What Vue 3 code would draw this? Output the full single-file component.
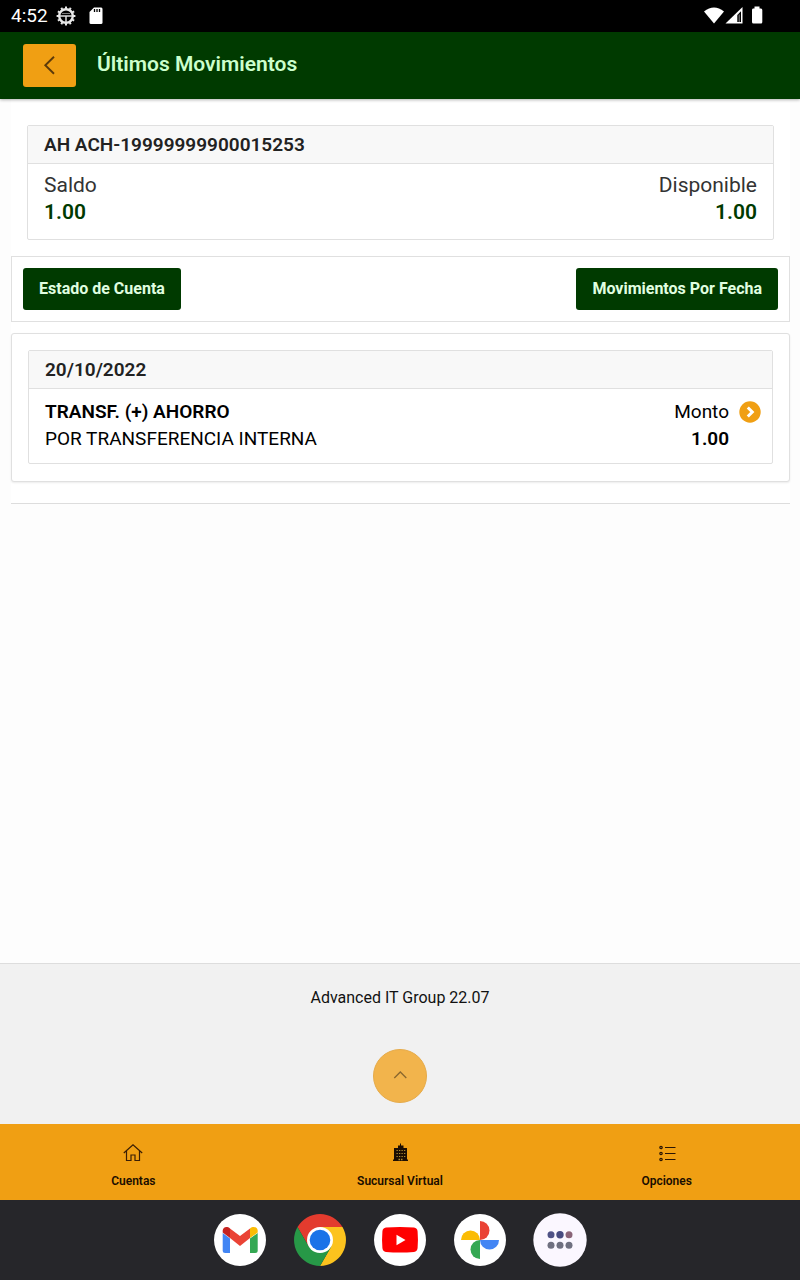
<script setup>
const account = { name: 'AH ACH-19999999900015253', balance: '1.00', available: '1.00' }
const movements = [
  { date: '20/10/2022', title: 'TRANSF. (+) AHORRO', detail: 'POR TRANSFERENCIA INTERNA', amount: '1.00' }
]
const teeth = Array.from({ length: 12 }, (_, i) => i * 30)
</script>

<template>
  <div class="screen">
    <div class="status">
      <span class="clock">4:52</span>
      <svg class="gear" width="20" height="20" viewBox="0 0 20 20">
        <circle cx="10" cy="10" r="6.8" fill="none" stroke="#e8e8e8" stroke-width="2.4" />
        <path v-for="t in teeth" :key="t" d="M10 .6V3" stroke="#e8e8e8" stroke-width="2" :transform="`rotate(${t} 10 10)`" />
        <path d="M4 10H16M10 10V16" stroke="#ddd" stroke-width="1.5" />
        <path d="M6 7.500h8" stroke="#777" stroke-width="1" />
      </svg>
      <svg class="card-icon" width="14" height="18" viewBox="0 0 14 18">
        <path d="M5 .5H12.2Q13.5.5 13.5 2V15.500Q13.500 17 12 17H2Q.5 17 .5 15.500V5Z" fill="#fff" />
        <path d="M5.500 2V5M8 2V5M10.500 2V5" stroke="#000" stroke-width="1.300" />
      </svg>
      <span class="grow"></span>
      <svg width="60" height="20" viewBox="0 0 60 20">
        <path d="M1 5.500Q11-2.500 21 5.500L11 17.500Z" fill="#fff" />
        <path d="M22.500 17.500L39.500 1V17.500Z" fill="#fff" />
        <path d="M34.300 9L38 5.300V16H34.300Z" fill="#000" />
        <path d="M36.200 8.500V16" stroke="#888" stroke-width="1" />
        <path d="M50 2.500H51.500V.5H56.500V2.500H58Q59.300 2.500 59.300 4V16Q59.300 17.500 58 17.500H50.500Q49 17.500 49 16V4Q49 2.500 50 2.500Z" fill="#fff" />
      </svg>
    </div>

    <header class="header">
      <button class="back" type="button" aria-label="Atrás">
        <svg width="14" height="20" viewBox="0 0 14 20"><path d="M11 .8L2.300 9.300L11 17.800" fill="none" stroke="#5c3a0a" stroke-width="1.900" /></svg>
      </button>
      <h1>Últimos Movimientos</h1>
    </header>

    <main class="main">
      <div class="content">
        <section class="card account">
          <h2>{{ account.name }}</h2>
          <div class="card-body balances">
            <div><p>Saldo</p><strong>{{ account.balance }}</strong></div>
            <div class="right"><p>Disponible</p><strong>{{ account.available }}</strong></div>
          </div>
        </section>

        <div class="toolbar">
          <button type="button">Estado de Cuenta</button>
          <button type="button">Movimientos Por Fecha</button>
        </div>

        <section class="panel">
          <article v-for="m in movements" :key="m.date" class="card">
            <h2>{{ m.date }}</h2>
            <div class="card-body movement">
              <div class="desc"><strong>{{ m.title }}</strong><p>{{ m.detail }}</p></div>
              <div class="right"><p>Monto</p><strong>{{ m.amount }}</strong></div>
              <button class="more" type="button" aria-label="Ver detalle">
                <svg width="22" height="22" viewBox="0 0 22 22">
                  <circle cx="11" cy="11" r="10.700" fill="#f09f13" />
                  <path d="M8.800 6.500L13.300 11L8.800 15.500" fill="none" stroke="#fff" stroke-width="3" />
                </svg>
              </button>
            </div>
          </article>
        </section>
      </div>
    </main>

    <footer class="footer">
      <p>Advanced IT Group 22.07</p>
      <button class="top" type="button" aria-label="Subir">
        <svg width="14" height="9" viewBox="0 0 14 9"><path d="M1.300 6L7.300 0L13.300 6" fill="none" stroke="#8a672e" stroke-width="1.300" /></svg>
      </button>
    </footer>

    <nav class="tabs">
      <a href="#cuentas">
        <svg width="20" height="20" viewBox="0 0 20 20" fill="none" stroke="#3a1e05" stroke-width="1.200">
          <path d="M.8 10L10 1.800L19.200 10M3.500 8V17.500H8V12H12V17.500H16.500V8" />
        </svg>
        <span>Cuentas</span>
      </a>
      <a href="#sucursal">
        <svg width="20" height="20" viewBox="0 0 20 20">
          <path d="M10 .5H11V2.500H13.500V5H17V16.500H18V18H3V16.500H4V5H8V2.500H10Z" fill="#1c0e02" />
          <path d="M6.500 7.500H15.500M6.500 10.500H15.500M6.500 13.500H15.500" stroke="#b08a30" stroke-width="1.200" stroke-dasharray="1.300 1.200" />
          <path d="M8.500 16.500H10M11 16.500H12.500" stroke="#b08a30" stroke-width="1.500" />
        </svg>
        <span>Sucursal Virtual</span>
      </a>
      <a href="#opciones">
        <svg width="20" height="20" viewBox="0 0 20 20" fill="none" stroke="#2a1503" stroke-width="1.200">
          <circle cx="4" cy="4.500" r="1.200" /><circle cx="4" cy="10.500" r="1.200" /><circle cx="4" cy="16.500" r="1.200" />
          <path d="M8 4.500H18.500M8 10.500H18.500M8 16.500H18.500" />
        </svg>
        <span>Opciones</span>
      </a>
    </nav>

    <div class="dock">
      <button type="button" aria-label="Gmail">
        <svg viewBox="0 0 52 52">
          <circle cx="26" cy="26" r="26" fill="#fff" />
          <path d="M8.700 19L16 24.500V39H11.200Q8.700 39 8.700 36.500Z" fill="#4285f4" />
          <path d="M43.700 19L36 24.500V39H41.200Q43.700 39 43.700 36.500Z" fill="#34a853" />
          <path d="M16 14.500L26 22L36 14.500V24L26 32L16 24Z" fill="#ea4335" />
          <path d="M8.700 18.500V16.800C8.700 13 13 11.800 16 14.500V24Z" fill="#c5221f" />
          <path d="M43.700 18.500V16.800C43.700 13 39 11.800 36 14.500V24Z" fill="#fbbc04" />
        </svg>
      </button>
      <button type="button" aria-label="Chrome">
        <svg viewBox="0 0 52 52">
          <path d="M26 13H48.500A26 26 0 0 0 3.500 13L14.700 32.500L26 26Z" fill="#e33b2e" />
          <path d="M26 13H48.500A26 26 0 0 0 3.500 13L14.700 32.500L26 26Z" fill="#fcc31e" transform="rotate(120 26 26)" />
          <path d="M26 13H48.500A26 26 0 0 0 3.500 13L14.700 32.500L26 26Z" fill="#279847" transform="rotate(240 26 26)" />
          <circle cx="26" cy="26" r="13" fill="#fff" />
          <circle cx="26" cy="26" r="10.300" fill="#1a73e8" />
        </svg>
      </button>
      <button type="button" aria-label="YouTube">
        <svg viewBox="0 0 52 52">
          <circle cx="26" cy="26" r="26" fill="#fff" />
          <path d="M12 13.600Q26 12.600 40 13.600Q43.300 14 43.600 17.500Q44.300 26 43.600 34Q43.300 37.500 40 38Q26 39 12 38Q8.700 37.500 8.400 34Q7.700 26 8.400 17.500Q8.700 14 12 13.600Z" fill="#f00" />
          <path d="M22.500 20.700L31.500 26L22.500 31.300Z" fill="#fff" />
        </svg>
      </button>
      <button type="button" aria-label="Fotos">
        <svg viewBox="0 0 52 52">
          <circle cx="26" cy="26" r="26" fill="#fff" />
          <path d="M26 7A9.500 9.500 0 0 1 26 26Z" fill="#ea4335" />
          <path d="M45 26A9.500 9.500 0 0 1 26 26Z" fill="#4285f4" />
          <path d="M26 45A9.500 9.500 0 0 1 26 26Z" fill="#34a853" />
          <path d="M7 26A9.500 9.500 0 0 1 26 26Z" fill="#fbbc04" />
        </svg>
      </button>
      <button type="button" aria-label="Aplicaciones">
        <svg viewBox="0 0 52 52">
          <circle cx="26" cy="26" r="26.700" fill="#fbf7ff" />
          <circle cx="17" cy="20.700" r="3.500" fill="#4f5286" />
          <circle cx="26" cy="20.700" r="3.700" fill="#474b80" />
          <circle cx="35" cy="20.700" r="3.500" fill="#8a6478" />
          <circle cx="17" cy="31.300" r="3.500" fill="#6f7080" />
          <circle cx="26" cy="31.300" r="3.500" fill="#6f7080" />
          <circle cx="35" cy="31.300" r="3.500" fill="#6f7080" />
        </svg>
      </button>
    </div>
  </div>
</template>

<style>
body { margin: 0; background: #fdfdfd; }
</style>

<style scoped>
.screen {
  min-height: 100vh;
  display: flex;
  flex-direction: column;
  font-family: Roboto, "Liberation Sans", sans-serif;
  color: #111;
}
.screen *, .screen { box-sizing: border-box; }
h1, h2, p { margin: 0; }
button { font-family: inherit; border: 0; padding: 0; margin: 0; cursor: pointer; }
svg { display: block; overflow: visible; }

.status {
  height: 32px;
  background: #000;
  color: #fff;
  display: flex;
  align-items: center;
  padding: 0 37px 0 11px;
}
.clock { font-size: 19px; line-height: 32px; }
.gear { margin-left: 8px; }
.card-icon { margin-left: 13px; }
.grow { flex: 1; }

.header {
  position: relative;
  height: 67px;
  background: #003a00;
  display: flex;
  align-items: center;
  gap: 21px;
  padding: 0 23px;
  box-shadow: 0 1px 3px rgba(0, 0, 0, 0.3);
}
.back {
  width: 53px;
  height: 43px;
  background: #f09f13;
  border-radius: 3px;
  display: flex;
  align-items: center;
  justify-content: center;
}
h1 { font-size: 21px; line-height: 28px; padding-bottom: 4px; font-weight: 600; color: #ccffcc; }

.main { flex: 1; padding: 0 10px 0 11px; }
.content { background: #fff; border-bottom: 1px solid #ddd; padding: 26px 0 21px; }
.card { border: 1px solid #e0e0e0; border-radius: 2px; background: #fff; }
.account { margin: 0 16px 16px; }
h2 {
  font-size: 19px;
  line-height: 37px;
  font-weight: 600;
  color: #222;
  background: #f8f8f8;
  border-bottom: 1px solid #e0e0e0;
  padding: 0 16px;
}
.card-body { display: flex; justify-content: space-between; padding: 8px 16px 13px; line-height: 27px; }
.card-body strong { display: block; font-weight: 600; }
.right { text-align: right; }
.balances { font-size: 21px; color: #333; }
.balances strong { color: #003a00; }

.toolbar {
  display: flex;
  justify-content: space-between;
  border: 1px solid #e0e0e0;
  padding: 11px;
  margin-bottom: 11px;
  background: #fff;
}
.toolbar button {
  height: 42px;
  padding: 0 16px 2px;
  border-radius: 3px;
  background: #003a00;
  color: #e0ffe0;
  font-size: 16px;
  font-weight: 700;
}
.panel {
  border: 1px solid #e0e0e0;
  border-radius: 3px;
  padding: 16px 16px 17px;
  background: #fff;
  box-shadow: 0 1px 2px rgba(0, 0, 0, 0.08);
}
.movement { font-size: 19px; color: #000; padding: 9px 11px 11px 16px; }
.desc { flex: 1; }
.more { width: 22px; height: 22px; margin: 3px 0 0 10px; background: none; }

.footer {
  min-height: 161px;
  background: #f1f1f1;
  border-top: 1px solid #ddd;
  display: flex;
  flex-direction: column;
  align-items: center;
  padding: 22px 0 20px;
  gap: 39px;
  font-size: 16px;
  line-height: 24px;
}
.top {
  width: 54px;
  height: 54px;
  border-radius: 50%;
  border: 1px solid #e6ab4a;
  background: #f2b44c;
  display: flex;
  align-items: center;
  justify-content: center;
}

.tabs { display: grid; grid-template-columns: repeat(3, 1fr); height: 76px; background: #f09f13; }
.tabs a {
  display: flex;
  flex-direction: column;
  align-items: center;
  padding-top: 19px;
  gap: 10px;
  font-size: 12px;
  line-height: 16px;
  font-weight: 600;
  color: #1a0d00;
  text-decoration: none;
}
.dock { height: 80px; background: #26262a; display: flex; justify-content: center; align-items: center; gap: 28px; }
.dock button { width: 52px; height: 52px; background: none; }
</style>
